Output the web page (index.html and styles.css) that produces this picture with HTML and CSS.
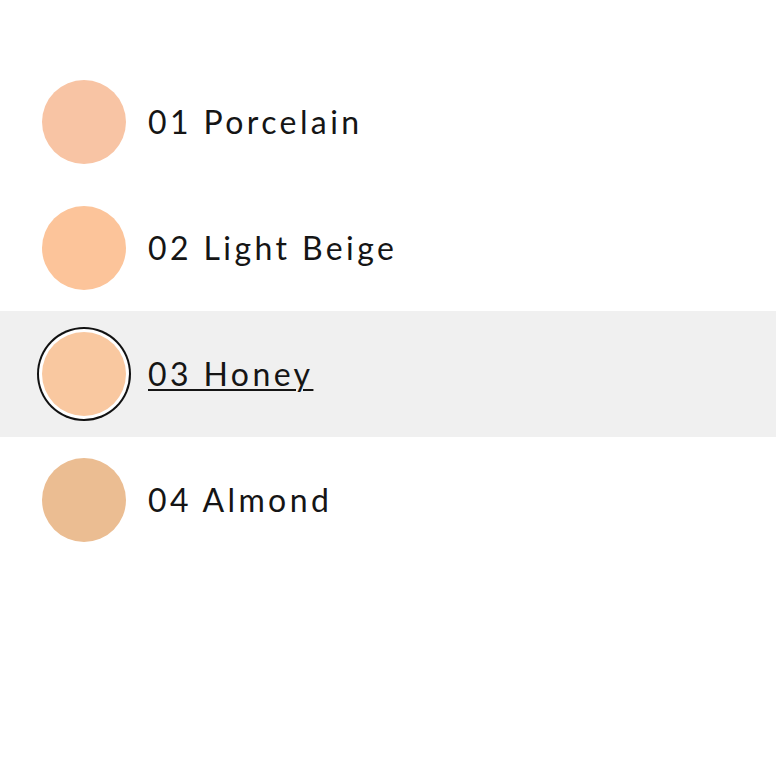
FILE: index.html
```html
<!DOCTYPE html>
<html>
<head>
<meta charset="utf-8">
<link rel="stylesheet" href="styles.css">
</head>
<body>
<ul class="shades">
  <li class="shade"><span class="swatch porcelain"></span><span class="name">01 Porcelain</span></li>
  <li class="shade"><span class="swatch beige"></span><span class="name">02 Light Beige</span></li>
  <li class="shade selected"><span class="swatch honey"></span><span class="name">03 Honey</span></li>
  <li class="shade"><span class="swatch almond"></span><span class="name">04 Almond</span></li>
</ul>
</body>
</html>
```
FILE: styles.css
```css
html, body {
  margin: 0;
  padding: 0;
  background: #ffffff;
}
.shades {
  list-style: none;
  margin: 0;
  padding: 59px 0 0 0;
}
.shade {
  height: 126px;
  display: flex;
  align-items: center;
  padding-left: 42px;
  gap: 22px;
}
.shade.selected {
  background: #f0f0f0;
}
.swatch {
  width: 84px;
  height: 84px;
  border-radius: 50%;
  flex: none;
}
.porcelain { background: #f8c4a4; }
.beige { background: #fcc49a; }
.honey { background: #f9c8a0; }
.almond { background: #ebbd92; }
.selected .swatch {
  box-shadow: 0 0 0 3px #ffffff, 0 0 0 5px #111111;
}
.name {
  font-family: Lato, "Liberation Sans", sans-serif;
  font-size: 32px;
  letter-spacing: 3.4px;
  color: #151515;
  padding-bottom: 2px;
}
.selected .name {
  text-decoration: underline;
  text-decoration-thickness: 2px;
  text-underline-offset: 3px;
}
```
